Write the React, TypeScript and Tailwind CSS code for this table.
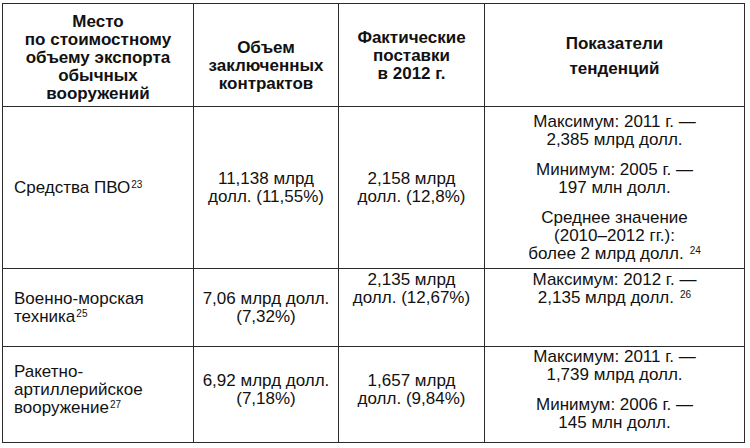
const Sup = ({ n, gap = 'ml-[1px]' }: { n: string; gap?: string }) => (
  <sup className={`relative -top-[5px] text-[10px] ${gap}`}>{n}</sup>
);

const cell = 'border border-[#2b2b2b] p-0';
const body = 'text-[17px] leading-[18px]';

const App = () => {
  return (
    <div className="h-[448px] w-[750px] bg-white pl-[2px] pt-[3px] font-['Liberation_Sans',Arial,sans-serif] text-[#111]">
      <table className="w-[742px] table-fixed border-collapse">
        <colgroup>
          <col className="w-[191px]" />
          <col className="w-[145px]" />
          <col className="w-[146px]" />
          <col className="w-[260px]" />
        </colgroup>

        <thead>
          <tr className="h-[103px] text-[17px] font-bold leading-[18px]">
            <th className={`${cell} pt-[9px] text-center align-top`}>
              Место
              <br />
              по стоимостному
              <br />
              объему экспорта
              <br />
              обычных
              <br />
              вооружений
            </th>
            <th className={`${cell} pt-[35px] text-center align-top`}>
              Объем
              <br />
              заключенных
              <br />
              контрактов
            </th>
            <th className={`${cell} pt-[25px] text-center align-top`}>
              Фактические
              <br />
              поставки
              <br />в 2012 г.
            </th>
            <th className={`${cell} pt-[27px] text-center align-top leading-[25px]`}>
              Показатели
              <br />
              тенденций
            </th>
          </tr>
        </thead>

        <tbody className={body}>
          <tr className="h-[162px]">
            <td className={`${cell} pl-[11px] align-middle`}>
              Средства ПВО
              <Sup n="23" />
            </td>
            <td className={`${cell} text-center align-middle`}>
              11,138 млрд
              <br />
              долл. (11,55%)
            </td>
            <td className={`${cell} text-center align-middle`}>
              2,158 млрд
              <br />
              долл. (12,8%)
            </td>
            <td className={`${cell} text-center align-middle`}>
              <div className="flex flex-col gap-[12px]">
                <p>
                  Максимум: 2011 г. —
                  <br />
                  2,385 млрд долл.
                </p>
                <p>
                  Минимум: 2005 г. —
                  <br />
                  197 млн долл.
                </p>
                <p>
                  Среднее значение
                  <br />
                  (2010–2012 гг.):
                  <br />
                  более 2 млрд долл.
                  <Sup n="24" gap="ml-[6px]" />
                </p>
              </div>
            </td>
          </tr>

          <tr className="h-[78px]">
            <td className={`${cell} pl-[11px] align-middle`}>
              Военно-морская
              <br />
              техника
              <Sup n="25" />
            </td>
            <td className={`${cell} text-center align-middle`}>
              7,06 млрд долл.
              <br />
              (7,32%)
            </td>
            <td className={`${cell} pt-[2px] text-center align-top`}>
              2,135 млрд
              <br />
              долл. (12,67%)
            </td>
            <td className={`${cell} pt-[2px] text-center align-top`}>
              Максимум: 2012 г. —
              <br />
              2,135 млрд долл.
              <Sup n="26" gap="ml-[6px]" />
            </td>
          </tr>

          <tr className="h-[96px]">
            <td className={`${cell} pb-[9px] pl-[11px] align-middle`}>
              Ракетно-
              <br />
              артиллерийское
              <br />
              вооружение
              <Sup n="27" />
            </td>
            <td className={`${cell} pb-[9px] text-center align-middle`}>
              6,92 млрд долл.
              <br />
              (7,18%)
            </td>
            <td className={`${cell} pb-[9px] text-center align-middle`}>
              1,657 млрд
              <br />
              долл. (9,84%)
            </td>
            <td className={`${cell} pb-[9px] text-center align-middle`}>
              <div className="flex flex-col gap-[12px]">
                <p>
                  Максимум: 2011 г. —
                  <br />
                  1,739 млрд долл.
                </p>
                <p>
                  Минимум: 2006 г. —
                  <br />
                  145 млн долл.
                </p>
              </div>
            </td>
          </tr>
        </tbody>
      </table>
    </div>
  );
};

export default App;
